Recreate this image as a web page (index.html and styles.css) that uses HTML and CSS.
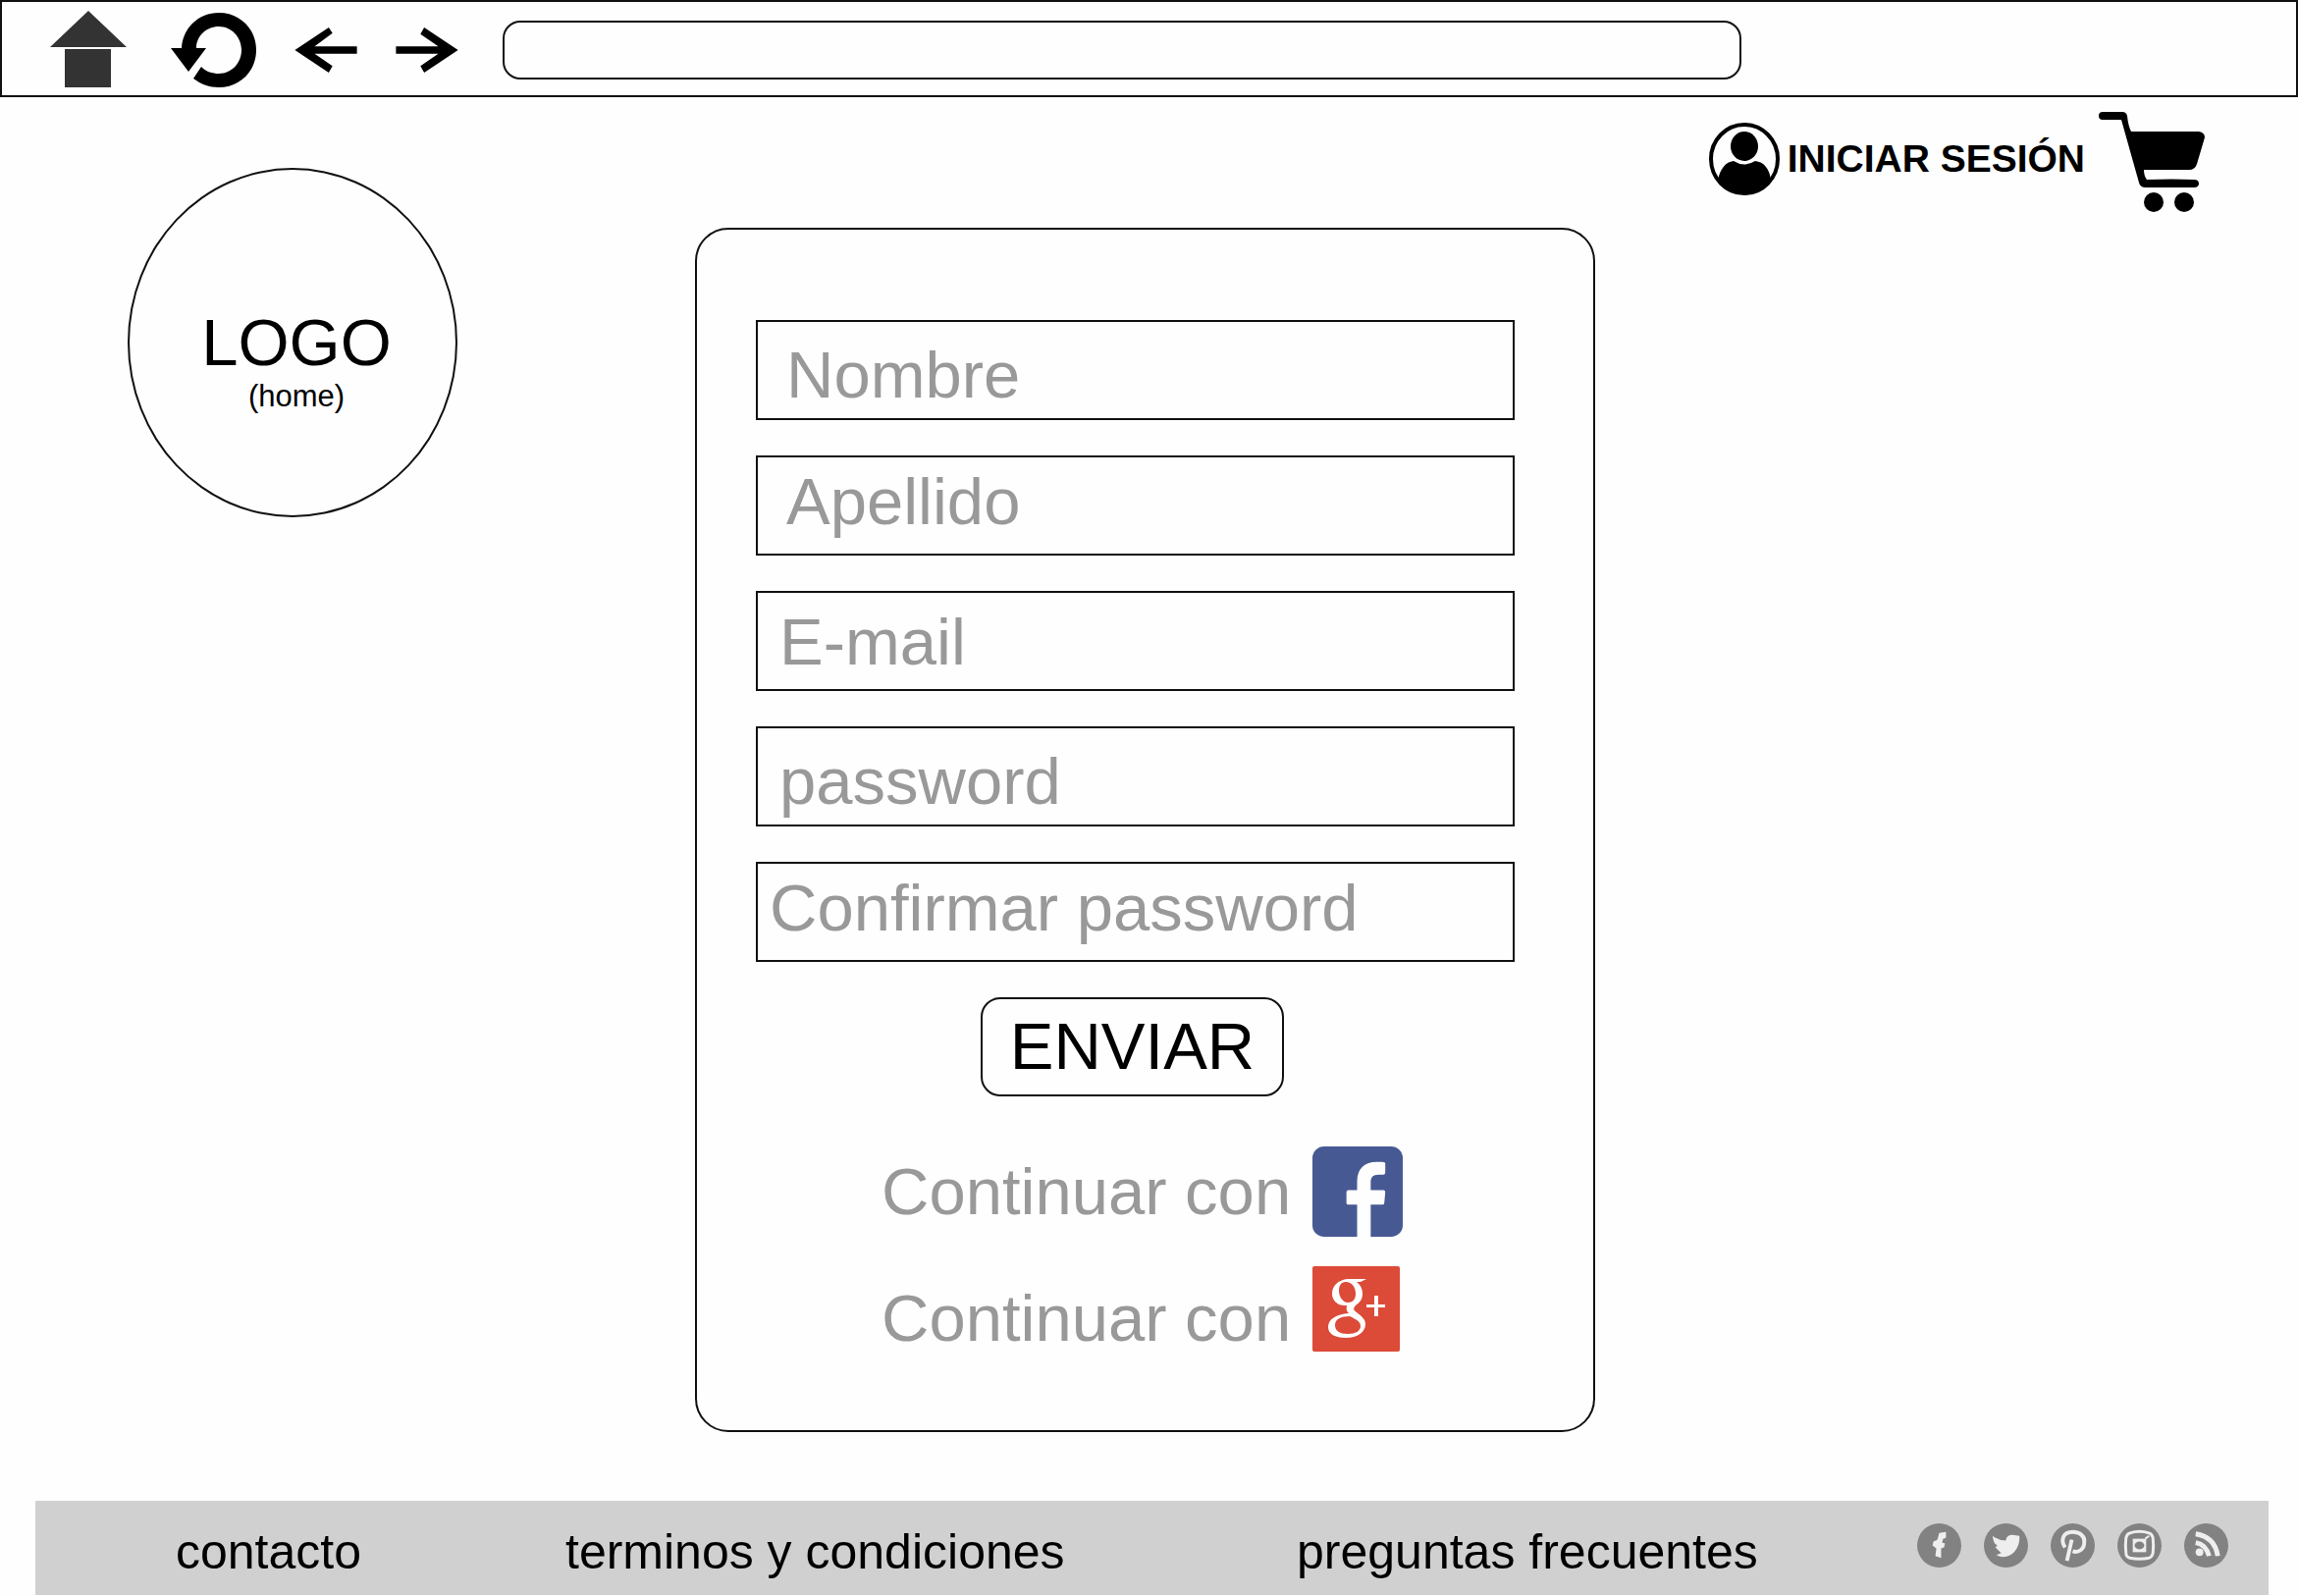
FILE: index.html
```html
<!DOCTYPE html>
<html lang="es">
<head>
<meta charset="utf-8">
<meta name="viewport" content="width=device-width, initial-scale=1">
<title>Registro</title>
<link rel="stylesheet" href="styles.css">
</head>
<body>
<header class="toolbar">
  <button class="tool tool-home" type="button" aria-label="Inicio">
    <svg width="80" height="80" viewBox="0 0 80 80" fill="#333"><path d="M40 0 79 37H1z"/><path d="M16 39h47v39H16z"/></svg>
  </button>
  <button class="tool tool-reload" type="button" aria-label="Recargar">
    <svg width="88" height="76" viewBox="0 0 88 76"><path d="M11 36C12 16 28 0 49 0c22 0 38 17 38 38S71 76 49 76c-10 0-18-3-26-9l8-12c5 5 11 7 18 7 13 0 23-11 23-24S62 14 49 14 26 24 26 36h10L18 60 0 36z"/></svg>
  </button>
  <button class="tool tool-back" type="button" aria-label="Atrás">
    <svg width="66" height="46" viewBox="0 0 66 48"><path d="M0 24 36 0l4 6-19 14h45v8H21l19 13-4 7z"/></svg>
  </button>
  <button class="tool tool-forward" type="button" aria-label="Adelante">
    <svg width="66" height="46" viewBox="0 0 66 48"><path d="M66 24 30 0l-4 7 19 13H0v8h45L26 41l4 7z"/></svg>
  </button>
  <input class="address" type="text" aria-label="Dirección">
</header>

<main class="page">
  <a class="logo" href="#">
    <span class="logo-name">LOGO</span>
    <span class="logo-note">(home)</span>
  </a>

  <form class="card">
    <input class="field indent-wide text-low" type="text" placeholder="Nombre" aria-label="Nombre">
    <input class="field indent-wide text-high" type="text" placeholder="Apellido" aria-label="Apellido">
    <input class="field" type="email" placeholder="E-mail" aria-label="E-mail">
    <input class="field text-low" type="password" placeholder="password" aria-label="password">
    <input class="field indent-narrow text-high" type="password" placeholder="Confirmar password" aria-label="Confirmar password">
    <button class="submit" type="submit">ENVIAR</button>
    <div class="providers">
      <a class="provider" href="#">Continuar con
        <svg width="92" height="92" viewBox="0 0 93 93" role="img" aria-label="Facebook"><rect width="93" height="93" rx="12" fill="#475993"/><path fill="#fefefe" d="M46 93V60H37q-2 0-2-2V47q0-2 2-2h9V36C46 23 54 16 66 16h6q3 0 3 2v9q0 2-2 2h-5c-6 0-8 3-8 8v8h13q2 0 2 2l-1 11q0 2-2 2H60v33z"/></svg>
      </a>
      <a class="provider provider-tall" href="#">Continuar con
        <svg width="89" height="87" viewBox="0 0 89 87" role="img" aria-label="Google+"><rect width="89" height="87" rx="2" fill="#dc4a38"/><path fill="#fefefe" fill-rule="evenodd" d="M36 13h19l-6 3h-4c4 3 6 7 6 12 0 6-3 9-7 12-3 3-2 5 1 7 5 4 9 7 9 12 0 8-8 14-20 14-11 0-18-4-18-11 0-8 8-13 21-14-2-2-3-4-2-8-9 1-15-5-15-12 0-8 6-14 16-15zM34 16c-5 0-7 4-7 9 0 6 4 12 9 12s8-3 8-9c0-7-4-12-10-12zM38 51c-9 0-15 3-15 9s5 9 13 9 13-3 13-8-5-7-11-10z"/><path fill="#fefefe" d="M63 30h4v9h7v3h-7v9h-4v-9h-8v-3h8z"/></svg>
      </a>
    </div>
  </form>

  <nav class="account">
    <a class="sign-in" href="#">
      <svg width="72" height="74" viewBox="0 0 72 74"><ellipse cx="36" cy="37" rx="34" ry="35" fill="none" stroke="#000" stroke-width="4"/><ellipse cx="36" cy="24" rx="14" ry="15"/><path d="M9 59C11 47 17 40 25 39q11 7 22 0c9 1 15 8 16 20Q51 73 36 73T9 59z"/></svg>
      INICIAR SESIÓN
    </a>
    <a class="cart" href="#" aria-label="Carrito">
      <svg width="108" height="102" viewBox="0 0 108 102"><path fill-rule="evenodd" d="M4 0h20q4 0 5 4 1 10 4 16h69q6 1 6 6l-8 27q-2 6-8 6H46q0 6 3 10 26-1 48 0 5 0 5 4t-5 4H48q-6 0-7-5L23 8H4Q0 8 0 4T4 0z"/><circle cx="56" cy="92" r="10"/><circle cx="87" cy="92" r="10"/></svg>
    </a>
  </nav>
</main>

<footer class="footer">
  <nav class="footer-links">
    <a href="#">contacto</a>
    <a href="#">terminos y condiciones</a>
    <a href="#">preguntas frecuentes</a>
  </nav>
  <div class="social">
    <a href="#" aria-label="Facebook"><svg width="45" height="45" viewBox="0 0 46 46"><circle cx="23" cy="23" r="23" fill="#828282"/><path fill="#eee" d="m23 10 7-1v6l-3 1-1 4 3 1-1 4-3 1v10l-6-2 1-8-4-3 1-4 4-2z"/></svg></a>
    <a href="#" aria-label="Twitter"><svg width="45" height="45" viewBox="0 0 46 46"><circle cx="23" cy="23" r="23" fill="#828282"/><path fill="#eee" d="M9 13q7 5 14 5c0-4 3-6 7-6l7 1c1 11-6 22-17 22-3 0-5-1-7-2l5-2-6-6 2-2c-4-2-4-6-5-10z"/></svg></a>
    <a href="#" aria-label="Pinterest"><svg width="45" height="45" viewBox="0 0 46 46"><circle cx="23" cy="23" r="23" fill="#828282"/><path d="M15 25c-5-8-2-16 8-16 8 0 13 5 12 11 0 7-6 11-12 9M22 17l-5 22" fill="none" stroke="#eee" stroke-width="4"/></svg></a>
    <a href="#" aria-label="Instagram"><svg width="45" height="45" viewBox="0 0 46 46"><circle cx="23" cy="23" r="23" fill="#828282"/><path d="M13 10q10-3 20 0 3 1 4 5 1 8 0 16-1 4-4 5-10 2-20 0-4-1-4-5-1-8 0-16 1-4 4-5z" fill="none" stroke="#eee" stroke-width="3"/><path d="M16 16h14v14H16z" fill="#eee"/><ellipse cx="23" cy="23" rx="5" ry="4" fill="#828282"/><path d="m29 16 4-3" stroke="#eee" stroke-width="2"/></svg></a>
    <a href="#" aria-label="RSS"><svg width="45" height="45" viewBox="0 0 46 46"><circle cx="23" cy="23" r="23" fill="#828282"/><circle cx="16" cy="30" r="4" fill="#eee"/><path d="M12 20q11 2 14 14M12 11q20 3 23 23" fill="none" stroke="#eee" stroke-width="5"/></svg></a>
  </div>
</footer>
</body>
</html>
```
FILE: styles.css
```css
* {
  box-sizing: border-box;
}

body {
  margin: 0;
  background: #fefefe;
  color: #000;
  font-family: "Liberation Sans", Arial, sans-serif;
}

a {
  color: inherit;
  text-decoration: none;
}

svg {
  display: block;
  flex: none;
}

/* Browser bar */
.toolbar {
  display: flex;
  align-items: center;
  min-height: 99px;
  padding-top: 2px;
  border: 2px solid #111;
}

.tool {
  flex: none;
  padding: 0;
  border: 0;
  background: none;
}

.tool-home {
  margin-left: 48px;
}

.tool-reload {
  margin-left: 44px;
}

.tool-back,
.tool-forward {
  margin-left: 37px;
}

.address {
  width: 54%;
  height: 60px;
  margin-left: 44px;
  padding: 0 18px;
  border: 2px solid #111;
  border-radius: 18px;
  background: none;
  font: 31px "Liberation Sans", Arial, sans-serif;
}

/* Page body: logo, form, account */
.page {
  display: grid;
  grid-template-columns: 1fr minmax(0, 917px) 1fr;
  align-items: start;
  padding-right: 8px;
}

.logo {
  display: flex;
  flex-direction: column;
  align-items: center;
  justify-content: center;
  width: 336px;
  height: 356px;
  margin: 72px 0 0 130px;
  padding: 34px 0 0 8px;
  border: 2px solid #111;
  border-radius: 50%;
}

.logo-name {
  font-size: 67px;
  line-height: 76px;
}

.logo-note {
  font-size: 31px;
  line-height: 34px;
}

.card {
  display: flex;
  flex-direction: column;
  gap: 36px;
  margin-top: 133px;
  padding: 92px 80px 61px 60px;
  border: 2px solid #111;
  border-radius: 34px;
}

.field {
  width: 100%;
  height: 102px;
  padding: 0 22px;
  border: 2px solid #111;
  border-radius: 0;
  background: none;
  font: 67px "Liberation Sans", Arial, sans-serif;
}

.field::placeholder {
  color: #999;
  opacity: 1;
}

.indent-wide {
  padding-left: 29px;
}

.indent-narrow {
  padding-left: 12px;
}

.text-low {
  padding-top: 8px;
}

.text-high {
  padding-bottom: 10px;
}

.submit {
  align-self: center;
  height: 101px;
  margin-right: 6px;
  padding: 0 28px 2px;
  border: 2px solid #111;
  border-radius: 20px;
  background: none;
  color: #000;
  font: 67px "Liberation Sans", Arial, sans-serif;
}

.providers {
  display: flex;
  flex-direction: column;
  gap: 30px;
  margin-top: 15px;
  padding-left: 128px;
}

.provider {
  display: flex;
  align-items: center;
  gap: 22px;
  color: #999;
  font-size: 67px;
  line-height: 76px;
}

.provider-tall {
  min-height: 106px;
}

.provider-tall svg {
  align-self: flex-start;
}

.account {
  display: flex;
  align-items: flex-start;
  justify-content: flex-end;
  gap: 14px;
  margin: 15px 87px 0 0;
}

.sign-in {
  display: flex;
  align-items: center;
  gap: 8px;
  padding-top: 11px;
  font-size: 39px;
  font-weight: bold;
  white-space: nowrap;
}

/* Footer */
.footer {
  display: flex;
  align-items: center;
  justify-content: space-between;
  min-height: 96px;
  margin: 70px 30px 0 36px;
  padding: 0 41px 0 143px;
  background: #d0d0d0;
}

.footer-links {
  display: grid;
  grid-template-columns: 397fr 745fr 480fr;
  flex: 0 1 1622px;
  padding-top: 8px;
  font-size: 50px;
  line-height: 56px;
  white-space: nowrap;
}

.social {
  display: flex;
  gap: 23px;
  padding-bottom: 6px;
}
```
